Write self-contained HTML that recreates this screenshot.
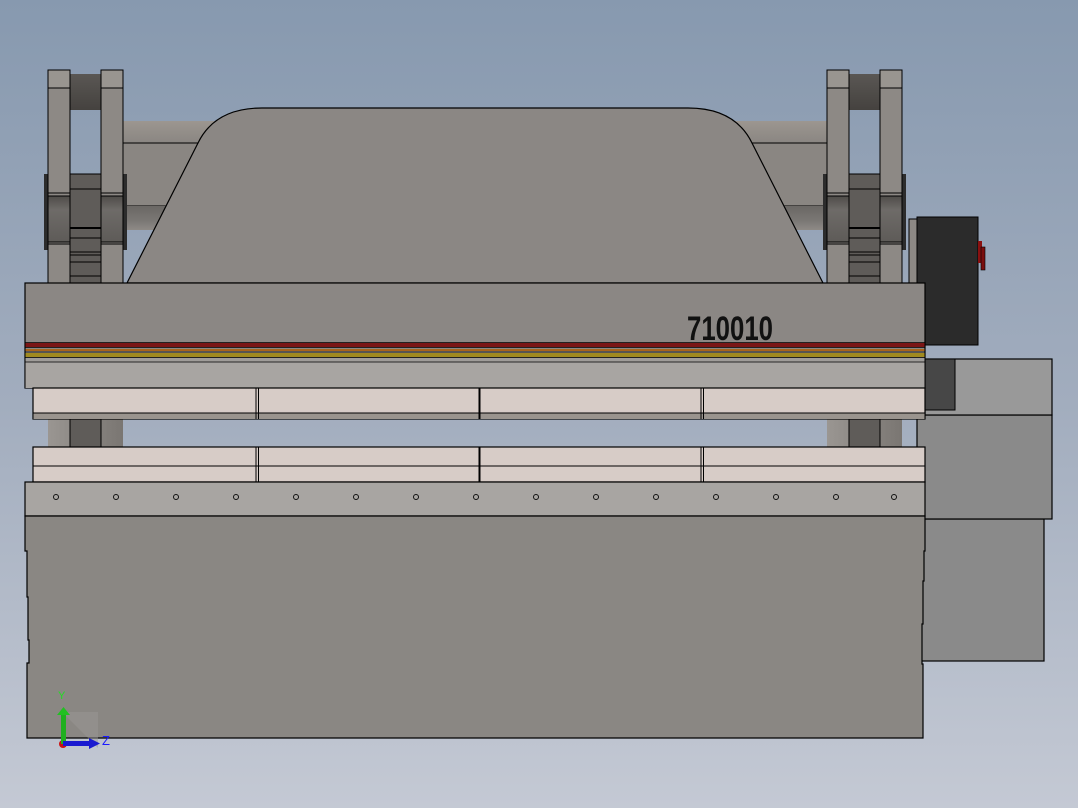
<!DOCTYPE html>
<html><head><meta charset="utf-8"><style>
html,body{margin:0;padding:0;width:1078px;height:808px;overflow:hidden}
svg{display:block}
</style></head><body>
<svg width="1078" height="808" viewBox="0 0 1078 808" xmlns="http://www.w3.org/2000/svg">
<defs>
<linearGradient id="bg" x1="0" y1="0" x2="0" y2="1">
<stop offset="0" stop-color="#8799af"/><stop offset="0.5" stop-color="#a2adbe"/><stop offset="1" stop-color="#c4c9d4"/>
</linearGradient>
<linearGradient id="tube" x1="0" y1="0" x2="0" y2="1">
<stop offset="0" stop-color="#9c9690"/><stop offset="1" stop-color="#8a8682"/>
</linearGradient>
<linearGradient id="tube2" x1="0" y1="0" x2="0" y2="1">
<stop offset="0" stop-color="#6a6764"/><stop offset="0.6" stop-color="#7a7774"/><stop offset="1" stop-color="#8e8a86"/>
</linearGradient>
<linearGradient id="roll" x1="0" y1="0" x2="0" y2="1">
<stop offset="0" stop-color="#5a5754"/><stop offset="1" stop-color="#45423f"/>
</linearGradient>
<linearGradient id="shaft" x1="0" y1="0" x2="0" y2="1">
<stop offset="0" stop-color="#4f4c49"/><stop offset="0.3" stop-color="#6e6b68"/><stop offset="1" stop-color="#5e5b58"/>
</linearGradient>
<linearGradient id="col" x1="0" y1="0" x2="1" y2="0">
<stop offset="0" stop-color="#9a9692"/><stop offset="1" stop-color="#7a7672"/>
</linearGradient>
<g id="link">
<rect x="44" y="174" width="83" height="76" fill="#2c2c2c"/>
<rect x="70" y="74" width="31" height="36" fill="url(#roll)"/>
<rect x="70" y="174" width="31" height="109" fill="#5f5c59" stroke="#000" stroke-width="1"/>
<line x1="70" y1="189" x2="101" y2="189" stroke="#000"/>
<line x1="70" y1="228" x2="101" y2="228" stroke="#000" stroke-width="2"/>
<line x1="70" y1="238" x2="101" y2="238" stroke="#000"/>
<line x1="70" y1="252" x2="101" y2="252" stroke="#000"/>
<line x1="70" y1="255" x2="101" y2="255" stroke="#000"/>
<line x1="70" y1="262" x2="101" y2="262" stroke="#000"/>
<line x1="70" y1="276" x2="101" y2="276" stroke="#000"/>
<rect x="48" y="70" width="22" height="213" fill="#8d8985" stroke="#000"/>
<rect x="101" y="70" width="22" height="213" fill="#8d8985" stroke="#000"/>
<rect x="48.5" y="70.5" width="21" height="18" fill="#999590"/>
<rect x="101.5" y="70.5" width="21" height="18" fill="#999590"/>
<line x1="48" y1="88" x2="70" y2="88" stroke="#000"/>
<line x1="101" y1="88" x2="123" y2="88" stroke="#000"/>
<rect x="48.5" y="196" width="21" height="46" fill="url(#shaft)"/>
<rect x="101.5" y="196" width="21" height="46" fill="url(#shaft)"/>
<g stroke="#000">
<line x1="48" y1="193" x2="70" y2="193"/><line x1="48" y1="196" x2="70" y2="196"/>
<line x1="48" y1="242" x2="70" y2="242"/><line x1="48" y1="244" x2="70" y2="244"/>
<line x1="101" y1="193" x2="123" y2="193"/><line x1="101" y1="196" x2="123" y2="196"/>
<line x1="101" y1="242" x2="123" y2="242"/><line x1="101" y1="244" x2="123" y2="244"/>
</g>
</g>
</defs>
<rect width="1078" height="808" fill="url(#bg)"/>

<!-- back tubes -->
<rect x="123" y="121" width="705" height="22" fill="url(#tube)"/>
<rect x="123" y="143" width="705" height="63" fill="#8a8682" stroke="#000" stroke-width="1"/>
<rect x="123" y="206" width="705" height="24" fill="url(#tube2)"/>

<!-- links -->
<use href="#link"/>
<use href="#link" transform="translate(779,0)"/>

<!-- housing -->
<path d="M127,283 L198,143 Q215,108 262,108 L688,108 Q735,108 752,143 L823,283 Z" fill="#8b8784" stroke="#000" stroke-width="1.2"/>

<!-- dark box right -->
<rect x="909" y="219" width="9" height="64" fill="#8d8985" stroke="#000"/>
<rect x="917" y="217" width="61" height="128" fill="#2b2b2b" stroke="#000"/>
<rect x="978" y="241" width="4" height="22" fill="#8a1010"/>
<rect x="981" y="247" width="4" height="23" fill="#7a0e0e" stroke="#000" stroke-width="0.6"/>

<!-- right side boxes -->
<rect x="921" y="519" width="123" height="142" fill="#8a8a8a" stroke="#000" stroke-width="1.2"/>
<rect x="917" y="415" width="135" height="104" fill="#8a8a8a" stroke="#000" stroke-width="1.2"/>
<rect x="925" y="359" width="127" height="56" fill="#999999" stroke="#000" stroke-width="1.2"/>
<rect x="925" y="359" width="30" height="51" fill="#474747" stroke="#000"/>

<!-- beam -->
<rect x="25" y="283" width="900" height="105" fill="#8b8784" stroke="#000" stroke-width="1.2"/>
<rect x="25.5" y="362" width="899" height="26" fill="#a8a5a2"/>
<rect x="25.5" y="343" width="899" height="4" fill="#7a1616"/>
<rect x="25.5" y="349" width="899" height="2" fill="#a8641c"/>
<rect x="25.5" y="353" width="899" height="4" fill="#a08a20"/>
<rect x="25.5" y="358" width="899" height="4" fill="#a09d9a"/>
<g stroke="#000" stroke-width="0.8">
<line x1="25" y1="342.5" x2="925" y2="342.5"/><line x1="25" y1="347.5" x2="925" y2="347.5"/>
<line x1="25" y1="352" x2="925" y2="352"/><line x1="25" y1="357.5" x2="925" y2="357.5"/>
<line x1="25" y1="362" x2="925" y2="362"/>
</g>
<text x="687" y="340" font-family="Liberation Sans, sans-serif" font-weight="bold" font-size="34" fill="#111" textLength="86" lengthAdjust="spacingAndGlyphs">710010</text>

<!-- columns between tools -->
<rect x="48" y="419" width="75" height="28" fill="url(#col)"/>
<rect x="70" y="419" width="31" height="28" fill="#5f5c59" stroke="#000"/>
<rect x="827" y="419" width="75" height="28" fill="url(#col)"/>
<rect x="849" y="419" width="31" height="28" fill="#5f5c59" stroke="#000"/>

<!-- upper tools -->
<rect x="33" y="388" width="892" height="31" fill="#d7ccc7" stroke="#000" stroke-width="1.2"/>
<rect x="33.5" y="413" width="891" height="6" fill="#9a948e"/>
<line x1="33" y1="413" x2="925" y2="413" stroke="#000"/>
<!-- lower tools -->
<rect x="33" y="447" width="892" height="35" fill="#d7ccc7" stroke="#000" stroke-width="1.2"/>
<line x1="33" y1="466" x2="925" y2="466" stroke="#000"/>
<g stroke="#000">
<line x1="256" y1="388" x2="256" y2="419"/><line x1="258.5" y1="388" x2="258.5" y2="419"/>
<line x1="479.5" y1="388" x2="479.5" y2="419" stroke-width="2"/>
<line x1="701" y1="388" x2="701" y2="419"/><line x1="703.5" y1="388" x2="703.5" y2="419"/>
<line x1="256" y1="447" x2="256" y2="482"/><line x1="258.5" y1="447" x2="258.5" y2="482"/>
<line x1="479.5" y1="447" x2="479.5" y2="482" stroke-width="2"/>
<line x1="701" y1="447" x2="701" y2="482"/><line x1="703.5" y1="447" x2="703.5" y2="482"/>
</g>

<!-- die bed -->
<rect x="25" y="482" width="900" height="34" fill="#a8a5a2" stroke="#000" stroke-width="1.2"/>
<g fill="none" stroke="#111" stroke-width="1">
<circle cx="56" cy="497" r="2.5"/><circle cx="116" cy="497" r="2.5"/><circle cx="176" cy="497" r="2.5"/><circle cx="236" cy="497" r="2.5"/>
<circle cx="296" cy="497" r="2.5"/><circle cx="356" cy="497" r="2.5"/><circle cx="416" cy="497" r="2.5"/><circle cx="476" cy="497" r="2.5"/>
<circle cx="536" cy="497" r="2.5"/><circle cx="596" cy="497" r="2.5"/><circle cx="656" cy="497" r="2.5"/><circle cx="716" cy="497" r="2.5"/>
<circle cx="776" cy="497" r="2.5"/><circle cx="836" cy="497" r="2.5"/><circle cx="894" cy="497" r="2.5"/>
</g>

<!-- lower body -->
<path d="M25,516 L925,516 L925,551 L924,551 L924,581 L923,581 L923,624 L922,624 L922,664 L923,664 L923,738 L27,738 L27,663 L29,663 L29,640 L28,640 L28,597 L27,597 L27,551 L25,551 Z" fill="#8a8783" stroke="#000" stroke-width="1.2"/>

<!-- axis triad -->
<path d="M62,712 L98,712 L98,748 Z" fill="#9a9896" opacity="0.5"/>
<circle cx="63" cy="744" r="4" fill="#cc1111"/>
<rect x="61" y="713" width="5" height="31" fill="#1fb01f"/>
<path d="M57,715 L63.5,707 L70,715 Z" fill="#22c022"/>
<rect x="63" y="741" width="28" height="5" fill="#1a1ad0"/>
<path d="M89,738 L100,743.5 L89,749 Z" fill="#1a1ad0"/>
<text x="58" y="699" font-family="Liberation Sans, sans-serif" font-size="11" fill="#22dd22">Y</text>
<text x="102" y="745" font-family="Liberation Sans, sans-serif" font-size="13" fill="#1a1aff">Z</text>
</svg>
</body></html>
